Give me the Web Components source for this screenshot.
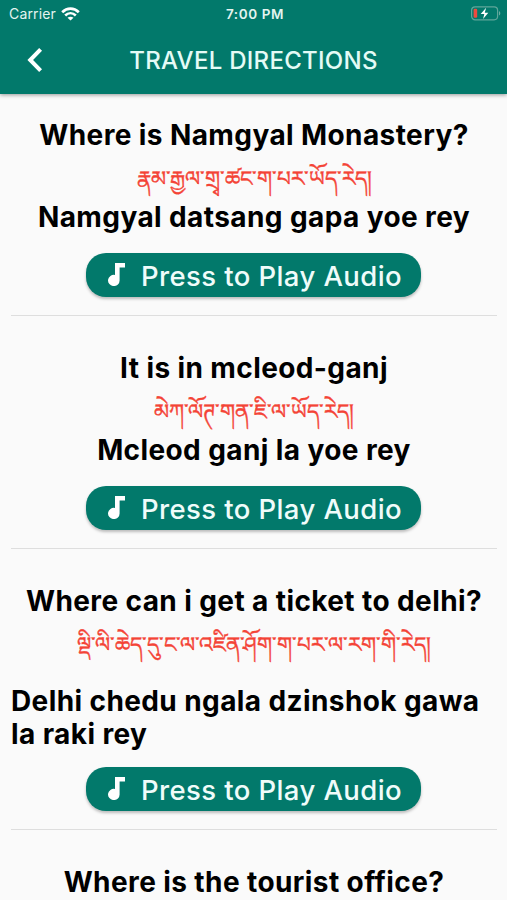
<!DOCTYPE html>
<html lang="en">
<head>
<meta charset="utf-8">
<title>Travel Directions</title>
<style>
  html, body { margin: 0; height: 100%; }
  body {
    background: #fafafa;
    color: #000;
    font-family: Inter, "Liberation Sans", sans-serif;
    overflow: hidden;
  }
</style>
</head>
<body>
<travel-app>
  <app-header slot="header">TRAVEL DIRECTIONS</app-header>
  <phrase-card>
    <span slot="english">Where is Namgyal Monastery?</span>
    <span slot="tibetan" lang="bo">རྣམ་རྒྱལ་གྲྭ་ཚང་ག་པར་ཡོད་རེད།</span>
    <span slot="spoken">Namgyal datsang gapa yoe rey</span>
  </phrase-card>
  <phrase-card>
    <span slot="english">It is in mcleod-ganj</span>
    <span slot="tibetan" lang="bo">མེཀ་ལོཊ་གན་ཇི་ལ་ཡོད་རེད།</span>
    <span slot="spoken">Mcleod ganj la yoe rey</span>
  </phrase-card>
  <phrase-card long>
    <span slot="english">Where can i get a ticket to delhi?</span>
    <span slot="tibetan" lang="bo">ལྡི་ལི་ཆེད་དུ་ང་ལ་འཛིན་ཤོག་ག་པར་ལ་རག་གི་རེད།</span>
    <span slot="spoken">Delhi chedu ngala dzinshok gawa la raki rey</span>
  </phrase-card>
  <phrase-card collapsed>
    <span slot="english">Where is the tourist office?</span>
  </phrase-card>
</travel-app>

<script>
class StatusBar extends HTMLElement {
  constructor() {
    super();
    const shadow = this.attachShadow({ mode: "open" });
    shadow.innerHTML = `
      <style>
        :host {
          display: grid;
          grid-template-columns: 1fr auto 1fr;
          align-items: center;
          height: 27px;
          padding: 0 6px 0 9px;
          color: #e4f4f0;
          font-size: 14px;
        }
        .left { display: flex; align-items: center; gap: 5px; letter-spacing: 0.15px; }
        .time { font-weight: 600; font-size: 13.5px; letter-spacing: 0.6px; }
        .battery { justify-self: end; }
        svg { display: block; }
      </style>
      <div class="left">
        <span>Carrier</span>
        <svg width="19" height="14" viewBox="0 0 19 14" fill="none" stroke="#fff" stroke-width="2.7">
          <path d="M1.2 5.2C6 .5 13 .5 17.8 5.2"/>
          <path d="M4.2 8.4c3.1-2.9 7.5-2.9 10.6 0"/>
          <path d="M9.5 13.6 6.5 10.8c1.7-1.5 4.3-1.5 6 0z" fill="#fff" stroke="none"/>
        </svg>
      </div>
      <span class="time">7:00 PM</span>
      <svg class="battery" width="31" height="15" viewBox="0 0 31 15">
        <rect x="1.6" y=".8" width="26" height="13" rx="3.5" fill="none" stroke="#5fa69a" stroke-width="1.2"/>
        <path d="M29 5v4.6c1.8-.8 1.8-3.8 0-4.6z" fill="#6bada2"/>
        <rect x="3.6" y="2.8" width="3.6" height="9" rx="1.2" fill="#f04a3e"/>
        <path d="M16.1 1.8 10.7 8h3.6l-1.2 5 5.2-6.3h-3.5z" fill="#fff"/>
      </svg>
    `;
  }
}

class AppHeader extends HTMLElement {
  constructor() {
    super();
    const shadow = this.attachShadow({ mode: "open" });
    shadow.innerHTML = `
      <style>
        :host {
          display: block;
          height: 94px;
          background: #02796b;
          box-shadow: 0 1px 4px rgba(0,0,0,0.4);
        }
        .bar {
          display: grid;
          grid-template-columns: 70px 1fr 70px;
          align-items: center;
          height: 66px;
        }
        h1 {
          margin: 0;
          color: #e4fbf6;
          font-size: 24px;
          font-weight: 500;
          text-align: center;
          white-space: nowrap;
          letter-spacing: 0.28px;
        }
        button { padding: 0; border: 0; background: none; justify-self: center; }
        svg { display: block; }
      </style>
      <status-bar></status-bar>
      <div class="bar">
        <button aria-label="Back">
          <svg width="16" height="26" viewBox="0 0 16 26" fill="none" stroke="#fff" stroke-width="4">
            <path d="M13.6 2.3 3.2 13l10.4 10.7"/>
          </svg>
        </button>
        <h1><slot></slot></h1>
      </div>
    `;
  }
}

class PlayButton extends HTMLElement {
  constructor() {
    super();
    const shadow = this.attachShadow({ mode: "open" });
    shadow.innerHTML = `
      <style>
        :host { display: block; }
        button {
          display: flex;
          align-items: center;
          gap: 16px;
          width: 335px;
          height: 44px;
          padding: 0 0 0 22px;
          border: 0;
          border-radius: 20px;
          background: #02796b;
          color: #effcfa;
          font: 500 27.5px/44px Inter, "Liberation Sans", sans-serif;
          letter-spacing: 0.4px;
          white-space: nowrap;
          box-shadow: 0 2px 3px rgba(0,0,0,0.25);
        }
        svg { display: block; flex: none; margin-top: -1px; }
        span { padding-top: 2px; }
      </style>
      <button>
        <svg width="17" height="23" viewBox="0 0 17 23" fill="#fff">
          <path d="M7 0h10v4.4h-5.4v12.8A5.8 5.6 0 1 1 7 12z"/>
        </svg>
        <span>Press to Play Audio</span>
      </button>
    `;
  }
}

class PhraseCard extends HTMLElement {
  constructor() {
    super();
    const shadow = this.attachShadow({ mode: "open" });
    shadow.innerHTML = `
      <style>
        :host {
          display: flex;
          flex-direction: column;
          align-items: center;
          height: 196px;
          margin: 0 10px 0 11px;
          padding-top: 25px;
          border-bottom: 1px solid #dedede;
        }
        :host(:not(:first-of-type)) { padding-top: 36px; }
        :host([long]) { height: 244px; }
        .line {
          font-size: 28px;
          font-weight: 650;
          line-height: 33px;
          letter-spacing: 0.4px;
          white-space: nowrap;
        }
        .tibetan {
          height: 49px;
          color: #f44336;
          font-size: 21.5px;
          line-height: 52px;
          white-space: nowrap;
          -webkit-text-stroke: 0.4px #f44336;
        }
        play-button { margin: 19px 1px 0 0; }
        :host([long]) .spoken { align-self: stretch; margin-top: 18px; white-space: normal; }
        :host([long]) play-button { margin-top: 16px; }
        /* only the question is shown */
        :host([collapsed]) { height: auto; border: 0; }
        :host([collapsed]) :is(.tibetan, .spoken, play-button) { display: none; }
      </style>
      <div class="line"><slot name="english"></slot></div>
      <div class="tibetan"><slot name="tibetan"></slot></div>
      <div class="line spoken"><slot name="spoken"></slot></div>
      <play-button></play-button>
    `;
  }
}

class TravelApp extends HTMLElement {
  constructor() {
    super();
    const shadow = this.attachShadow({ mode: "open" });
    shadow.innerHTML = `
      <style>
        :host { display: flex; flex-direction: column; height: 900px; overflow: hidden; }
        main { flex: 1; min-height: 0; overflow: hidden; }
        ::slotted(app-header) { flex: none; position: relative; z-index: 1; }
      </style>
      <slot name="header"></slot>
      <main><slot></slot></main>
    `;
  }
}

customElements.define("status-bar", StatusBar);
customElements.define("app-header", AppHeader);
customElements.define("play-button", PlayButton);
customElements.define("phrase-card", PhraseCard);
customElements.define("travel-app", TravelApp);
</script>
</body>
</html>
